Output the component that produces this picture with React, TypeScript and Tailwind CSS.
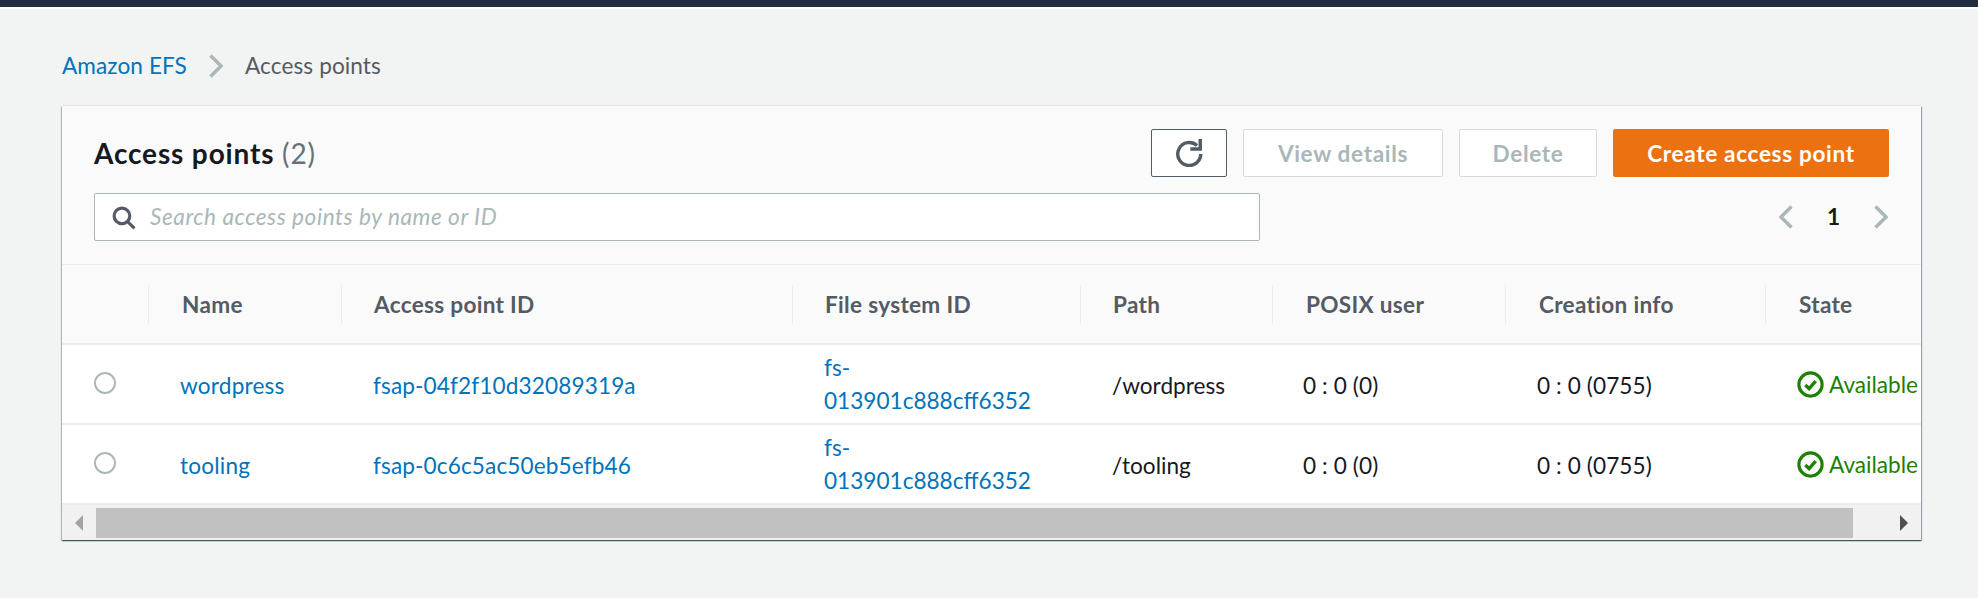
const rows = [
  { name: "wordpress", id: "fsap-04f2f10d32089319a", path: "/wordpress" },
  { name: "tooling", id: "fsap-0c6c5ac50eb5efb46", path: "/tooling" },
];

const columns = [
  { label: "Name", width: "w-[193px]", pad: "pl-[33px]" },
  { label: "Access point ID", width: "w-[451px]", pad: "pl-[32px]" },
  { label: "File system ID", width: "w-[288px]", pad: "pl-[32px]" },
  { label: "Path", width: "w-[192px]", pad: "pl-[32px]" },
  { label: "POSIX user", width: "w-[233px]", pad: "pl-[33px]" },
  { label: "Creation info", width: "w-[260px]", pad: "pl-[33px]" },
  { label: "State", width: "w-[156px]", pad: "pl-[33px]" },
];

const Chevron = ({ left, className }: { left?: boolean; className: string }) => (
  <svg viewBox="0 0 14 24" className={className} fill="none" stroke="#aab7b8" strokeWidth="3.4">
    <path d={left ? "M12.5 1.5L2 12l10.5 10.5" : "M1.5 1.5L12 12 1.5 22.5"} />
  </svg>
);

const CheckCircle = () => (
  <svg viewBox="0 0 26 26" className="h-[27px] w-[27px] shrink-0" fill="none" stroke="#1d8102">
    <circle cx="13" cy="13" r="11.2" strokeWidth="3" />
    <path d="M8 13.5l3.6 3.4L18 9.8" strokeWidth="3.2" />
  </svg>
);

const Row = ({ name, id, path }: { name: string; id: string; path: string }) => (
  <div className="flex h-[80px] items-center border-b-2 border-[#eaeded] bg-white pt-[3px] text-[22.6px] text-[#16191f] last:h-[78px] last:border-b-0">
    <div className="flex w-[86px] shrink-0 items-center pb-[6px] pl-[32px]">
      <span className="h-[22px] w-[22px] rounded-full border-2 border-[#aab7b8] bg-white" />
    </div>
    <div className="w-[193px] shrink-0 pl-[32px] tracking-[0.2px] text-[#0073bb]">{name}</div>
    <div className="w-[451px] shrink-0 pl-[32px] tracking-[0.12px] text-[#0073bb]">{id}</div>
    <div className="-mt-[4px] w-[288px] shrink-0 pl-[32px] leading-[33px] text-[#0073bb]">
      fs-
      <br />
      013901c888cff6352
    </div>
    <div className="w-[192px] shrink-0 pl-[32px]">{path}</div>
    <div className="w-[233px] shrink-0 pl-[31px] tracking-[0.1px]">0 : 0 (0)</div>
    <div className="w-[260px] shrink-0 pl-[32px] tracking-[0.1px]">0 : 0 (0755)</div>
    <div className="-mt-[1px] flex w-[156px] shrink-0 items-center gap-[5px] whitespace-nowrap pl-[32px] text-[#1d8102]">
      <CheckCircle />
      Available
    </div>
  </div>
);

export default function App() {
  return (
    <div className="h-[598px] w-[1978px] overflow-hidden bg-[#f2f3f3] font-['Lato',sans-serif]">
      <div className="h-[7px] bg-[#232f3e]" />
      <div className="h-[2px] bg-white" />
      <nav className="flex h-[97px] items-start gap-[22px] pl-[62px] pt-[42px] text-[22.6px] leading-[30px] tracking-[0.1px]">
        <a className="text-[#0073bb]">Amazon EFS</a>
        <Chevron className="mt-[3px] h-[24px] w-[14px]" />
        <span className="text-[#545b64]">Access points</span>
      </nav>
      <section className="ml-[62px] w-[1859px] overflow-hidden bg-white shadow-[0_1px_1px_0_rgba(0,28,36,0.5),1px_1px_1px_0_rgba(0,28,36,0.3),-1px_1px_1px_0_rgba(0,28,36,0.2),0_-1px_1px_0_rgba(0,28,36,0.06)]">
        <header className="h-[159px] border-b border-[#eaeded] bg-[#fafafa]">
          <div className="flex h-[87px] items-start justify-between pl-[32px] pr-[32px] pt-[23px]">
            <h1 className="mt-[2px] text-[28px] font-bold leading-[44px] tracking-[0.85px] text-[#16191f]">
              Access points <span className="font-normal text-[#687078]">(2)</span>
            </h1>
            <div className="flex h-[48px] items-stretch gap-[16px] text-[22.6px] font-bold tracking-[0.65px]">
              <button className="flex w-[76px] items-center justify-center rounded-[2px] border border-[#545b64] bg-white">
                <svg viewBox="0 0 27 26" className="h-[28px] w-[29px]" fill="none" stroke="#545b64" strokeWidth="3.2">
                  <path d="M24 14A10.7 10.7 0 1 1 20.5 6" />
                  <path d="M23.5 0v9.2h-9.2" />
                </svg>
              </button>
              <button className="w-[200px] rounded-[2px] border border-[#d5dbdb] bg-white pt-[1px] text-[#aab7b8]">
                View details
              </button>
              <button className="w-[138px] rounded-[2px] border border-[#d5dbdb] bg-white pt-[1px] text-[#aab7b8]">
                Delete
              </button>
              <button className="w-[276px] rounded-[2px] bg-[#ec7211] pt-[1px] text-white">
                Create access point
              </button>
            </div>
          </div>
          <div className="flex items-center justify-between pl-[32px] pr-[33px]">
            <div className="flex h-[48px] w-[1166px] items-center gap-[14px] rounded-[2px] border border-[#aab7b8] bg-white pl-[16px]">
              <svg viewBox="0 0 24 24" className="h-[25px] w-[25px]" fill="none" stroke="#545b64" strokeWidth="3">
                <circle cx="10.5" cy="10.5" r="7.5" />
                <path d="M16 16l6.5 6.5" />
              </svg>
              <span className="text-[22.6px] italic tracking-[0.55px] text-[#aab7b8]">Search access points by name or ID</span>
            </div>
            <div className="flex items-center gap-[34px] text-[22.6px] font-bold text-[#16191f]">
              <Chevron left className="h-[24px] w-[14px]" />
              <span>1</span>
              <Chevron className="h-[24px] w-[14px]" />
            </div>
          </div>
        </header>
        <div className="flex h-[80px] items-center border-b-2 border-[#eaeded] bg-[#fafafa] pt-[1px] text-[22.6px] font-bold tracking-[0.3px] text-[#545b64]">
          <div className="w-[86px] shrink-0" />
          {columns.map((col) => (
            <div key={col.label} className={`${col.width} ${col.pad} flex h-[39px] shrink-0 items-center border-l border-[#eaeded]`}>
              {col.label}
            </div>
          ))}
        </div>
        {rows.map((row) => (
          <Row key={row.name} {...row} />
        ))}
        <div className="flex h-[35px] items-stretch bg-[#f1f1f1] pb-[2px] pt-[3px]">
          <div className="flex w-[34px] items-center justify-center">
            <div className="h-0 w-0 border-y-[8px] border-r-[8px] border-y-transparent border-r-[#a3a3a3]" />
          </div>
          <div className="w-[1757px] bg-[#c1c1c1]" />
          <div className="flex flex-1 items-center justify-end pr-[13px]">
            <div className="h-0 w-0 border-y-[8px] border-l-[8px] border-y-transparent border-l-[#505050]" />
          </div>
        </div>
      </section>
    </div>
  );
}
